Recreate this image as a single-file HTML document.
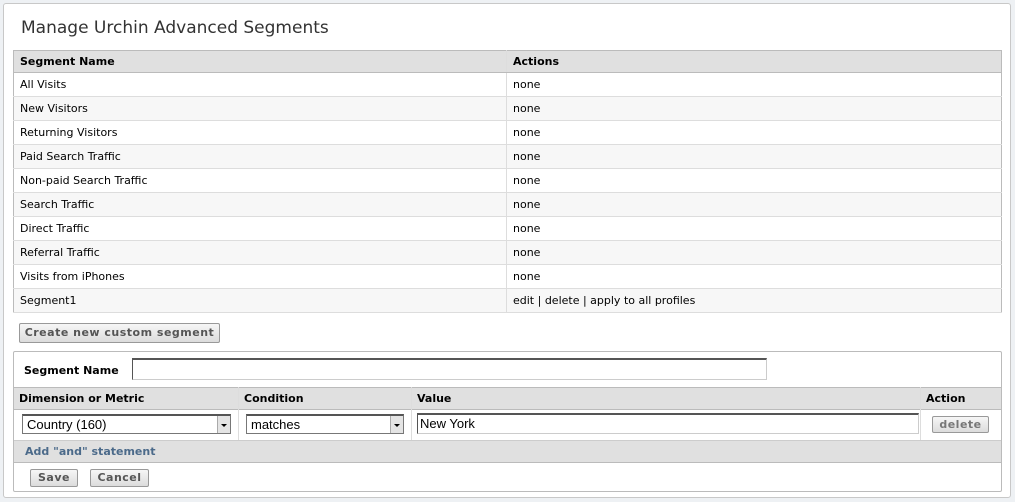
<!DOCTYPE html><html><head><style>
body{margin:0;background:#eef1f4;font-family:"DejaVu Sans",Verdana,sans-serif;font-size:11px;color:#000;width:1015px;height:502px;overflow:hidden;position:relative}
.box{position:absolute;left:3px;top:3px;width:1006px;height:493px;background:#fff;border:1px solid #c8c8c8;border-radius:3px}
h1{position:absolute;left:17px;top:14px;margin:0;font-family:"DejaVu Sans",Verdana,sans-serif;font-weight:normal;font-size:17px;color:#333}
table{border-collapse:collapse;position:absolute}
.t1{left:9px;top:46px;width:989px;border:1px solid #bbb}
.t1 td,.t1 th{height:23px;padding:0 0 0 6px;border-bottom:1px solid #ddd;text-align:left;font-size:11px}
.t1 th{background:#e0e0e0;border-bottom:1px solid #bbb;height:21px}
.t1 td+td,.t1 th+th{border-left:1px solid #ddd}
.t1 tr:nth-child(odd) td{background:#f7f7f7}
.btn{position:absolute;background:linear-gradient(#f6f6f6,#dcdcdc);border:1px solid #999;border-radius:2px;font-weight:bold;color:#555;font-size:11px;text-align:center;box-sizing:border-box;letter-spacing:.5px}
.form{position:absolute;left:9px;top:347px;width:987px;height:139px;border:1px solid #bbb;border-radius:2px}
.abs{position:absolute}
.inp{position:absolute;background:#fff;border:1px solid #ccc;border-top:2px solid #555;border-left:1px solid #555;box-sizing:border-box;font-family:"Liberation Sans",Arial,sans-serif;font-size:13px;padding:1px 3px}
.sel .ar{position:absolute;right:0;top:0;width:13px;height:100%;background:#e4e4e4;border-left:1px solid #aaa;box-sizing:border-box}
.sel .ar:after{content:"";position:absolute;left:3px;top:8px;border:3px solid transparent;border-top:3px solid #000}
</style></head><body>
<div class="box">
<h1>Manage Urchin Advanced Segments</h1>
<table class="t1"><tr><th style="width:486px">Segment Name</th><th>Actions</th></tr>
<tr><td>All Visits</td><td>none</td></tr>
<tr><td>New Visitors</td><td>none</td></tr>
<tr><td>Returning Visitors</td><td>none</td></tr>
<tr><td>Paid Search Traffic</td><td>none</td></tr>
<tr><td>Non-paid Search Traffic</td><td>none</td></tr>
<tr><td>Search Traffic</td><td>none</td></tr>
<tr><td>Direct Traffic</td><td>none</td></tr>
<tr><td>Referral Traffic</td><td>none</td></tr>
<tr><td>Visits from iPhones</td><td>none</td></tr>
<tr><td>Segment1</td><td>edit | delete | apply to all profiles</td></tr>
</table>
<div class="btn" style="left:15px;top:319px;width:201px;height:20px;line-height:18px">Create new custom segment</div>
<div class="form">
<div class="abs" style="left:10px;top:12px;font-weight:bold">Segment Name</div>
<div class="inp" style="left:118px;top:6px;width:635px;height:22px"></div>
<div class="abs" style="left:0;top:35px;width:987px;height:21px;background:#e0e0e0;border-top:1px solid #bbb;border-bottom:1px solid #bbb"></div>
<div class="abs" style="left:5px;top:40px;font-weight:bold">Dimension or Metric</div>
<div class="abs" style="left:230px;top:40px;font-weight:bold">Condition</div>
<div class="abs" style="left:403px;top:40px;font-weight:bold">Value</div>
<div class="abs" style="left:912px;top:40px;font-weight:bold">Action</div>
<div class="abs" style="left:224px;top:35px;width:1px;height:53px;background:#ddd"></div>
<div class="abs" style="left:397px;top:35px;width:1px;height:53px;background:#ddd"></div>
<div class="abs" style="left:906px;top:35px;width:1px;height:53px;background:#ddd"></div>
<div class="inp sel" style="left:8px;top:62px;width:209px;height:20px;padding:1px 4px;border:1px solid #777;border-top:2px solid #555">Country (160)<span class="ar"></span></div>
<div class="inp sel" style="left:232px;top:62px;width:158px;height:20px;padding:1px 4px;border:1px solid #777;border-top:2px solid #555">matches<span class="ar"></span></div>
<div class="inp" style="left:403px;top:61px;width:502px;height:21px;padding:1px 2px">New York</div>
<div class="btn" style="left:918px;top:64px;width:57px;height:17px;line-height:15px;color:#777">delete</div>
<div class="abs" style="left:0;top:88px;width:987px;height:21px;background:#e0e0e0;border-top:1px solid #ccc;border-bottom:1px solid #bbb"></div>
<div class="abs" style="left:11px;top:93px;font-weight:bold;color:#4b6a8a">Add "and" statement</div>
<div class="btn" style="left:16px;top:117px;width:48px;height:18px;line-height:16px">Save</div>
<div class="btn" style="left:76px;top:117px;width:59px;height:18px;line-height:16px">Cancel</div>
</div>
</div>
</body></html>
